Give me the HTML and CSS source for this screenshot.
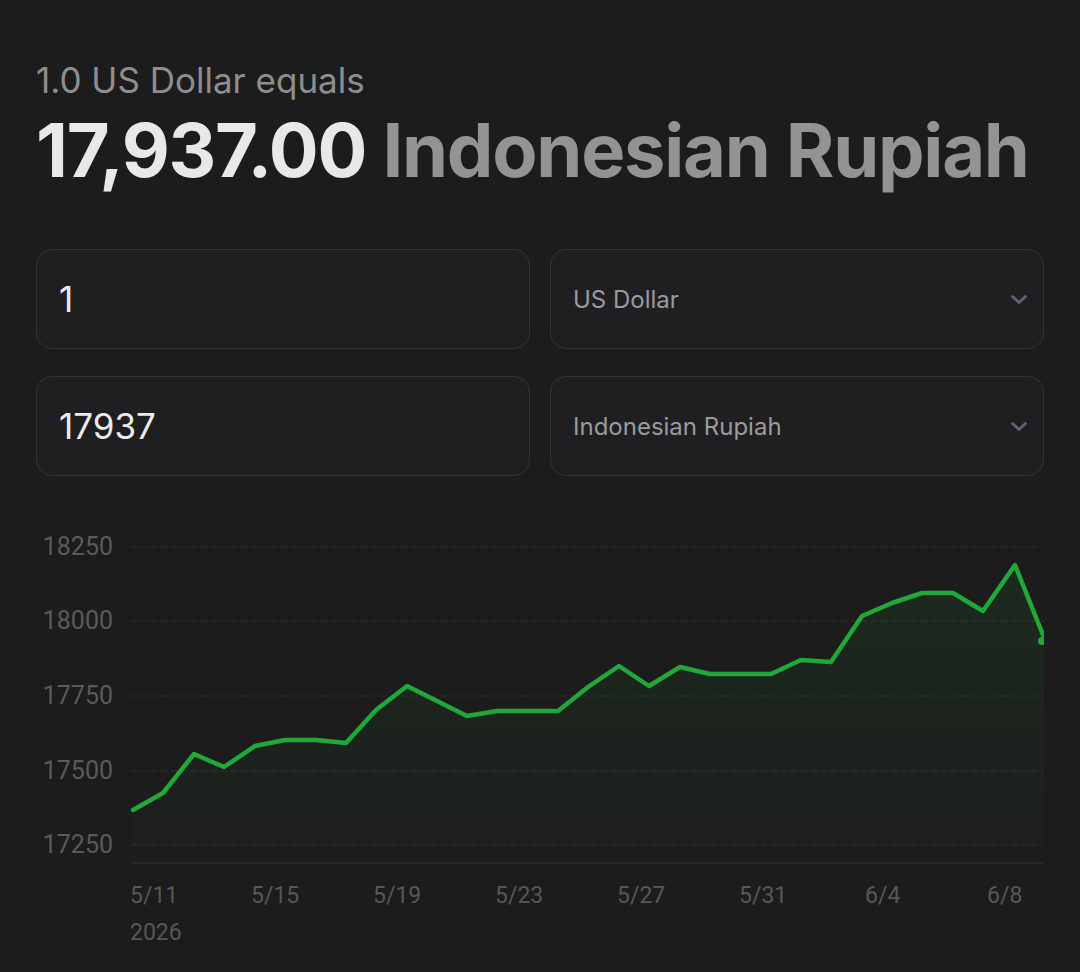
FILE: index.html
```html
<!DOCTYPE html>
<html lang="en">
<head>
<meta charset="utf-8">
<title>USD to IDR</title>
<link rel="stylesheet" href="styles.css">
</head>
<body>
<main class="page">
  <header class="rate">
    <p class="rate-lead">1.0 US Dollar equals</p>
    <h1 class="rate-value"><span class="rate-num">17,937.00</span> <span class="rate-cur">Indonesian Rupiah</span></h1>
  </header>

  <section class="converter">
    <div class="field"><input class="field-input" type="text" value="1"></div>
    <div class="select">
      <span class="select-label">US Dollar</span>
      <svg class="chevron" viewBox="0 0 18 11" width="18" height="11"><path d="M2.5 2.5l6.5 6 6.5-6" fill="none" stroke="currentColor" stroke-width="3" stroke-linecap="round" stroke-linejoin="round"/></svg>
    </div>
    <div class="field"><input class="field-input" type="text" value="17937"></div>
    <div class="select">
      <span class="select-label">Indonesian Rupiah</span>
      <svg class="chevron" viewBox="0 0 18 11" width="18" height="11"><path d="M2.5 2.5l6.5 6 6.5-6" fill="none" stroke="currentColor" stroke-width="3" stroke-linecap="round" stroke-linejoin="round"/></svg>
    </div>
  </section>

  <section class="chart">
    <svg class="chart-svg" viewBox="36 530 1008 440" width="1008" height="440">
      <defs>
        <linearGradient id="areaFill" x1="0" y1="0" x2="0" y2="1">
          <stop offset="0" stop-color="#22a83a" stop-opacity="0.10"/>
          <stop offset="1" stop-color="#22a83a" stop-opacity="0.02"/>
        </linearGradient>
      </defs>

      <g class="grid">
        <line x1="131" y1="547" x2="1044" y2="547"/>
        <line x1="131" y1="621" x2="1044" y2="621"/>
        <line x1="131" y1="696" x2="1044" y2="696"/>
        <line x1="131" y1="771" x2="1044" y2="771"/>
        <line x1="131" y1="845" x2="1044" y2="845"/>
      </g>
      <line class="axis" x1="131" y1="863" x2="1044" y2="863"/>

      <g class="y-labels">
        <text x="113" y="555">18250</text>
        <text x="113" y="629">18000</text>
        <text x="113" y="704">17750</text>
        <text x="113" y="779">17500</text>
        <text x="113" y="853">17250</text>
      </g>

      <g class="x-labels">
        <text x="130" y="903">5/11</text>
        <text x="130" y="940">2026</text>
        <text x="251" y="903">5/15</text>
        <text x="373" y="903">5/19</text>
        <text x="495" y="903">5/23</text>
        <text x="617" y="903">5/27</text>
        <text x="739" y="903">5/31</text>
        <text x="865" y="903">6/4</text>
        <text x="987" y="903">6/8</text>
      </g>

      <path class="area" fill="url(#areaFill)" d="M133 810 L163 793 L194 754 L224 767 L255 746 L285 740 L316 740 L346 743 L376 710 L407 686 L437 701 L467 716 L497 711 L528 711 L558 711 L588 687 L619 666 L649 686 L680 667 L710 674 L740 674 L771 674 L801 660 L831 662 L862 616 L892 603 L922 593 L953 593 L983 611 L1015 565 L1044 635 L1044 845 L133 845 Z"/>
      <polyline class="line" points="133,810 163,793 194,754 224,767 255,746 285,740 316,740 346,743 376,710 407,686 437,701 467,716 497,711 528,711 558,711 588,687 619,666 649,686 680,667 710,674 740,674 771,674 801,660 831,662 862,616 892,603 922,593 953,593 983,611 1015,565 1043,635"/>
      <circle class="end-dot" cx="1042" cy="641" r="4"/>
    </svg>
  </section>
</main>
</body>
</html>
```

FILE: styles.css
```css
* {
  box-sizing: border-box;
}

html,
body {
  margin: 0;
  background: #1c1c1c;
}

body {
  font-family: Inter, "Noto Sans", sans-serif;
  color: #e8e8e8;
}

.page {
  width: 1080px;
  padding: 59px 36px 0;
}

/* Headline rate */
.rate-lead {
  margin: 0;
  font-size: 35px;
  line-height: 42px;
  font-weight: 400;
  color: #8e8e8e;
}

.rate-value {
  margin: 5px 0 0;
  font-size: 74px;
  line-height: 88px;
  font-weight: 700;
  letter-spacing: -1.25px;
  white-space: nowrap;
}

.rate-num {
  color: #e8e8e8;
}

.rate-cur {
  color: #939393;
}

/* Amount and currency pickers */
.converter {
  margin-top: 55px;
  display: grid;
  grid-template-columns: 1fr 1fr;
  gap: 27px 20px;
}

.field,
.select {
  height: 100px;
  border: 1.5px solid #333337;
  border-radius: 16px;
  background: #1f1f22;
  display: flex;
  align-items: center;
}

.field-input {
  width: 100%;
  height: 100%;
  border: 0;
  outline: none;
  background: transparent;
  padding: 0 0 0 22px;
  font-family: Inter, "Noto Sans", sans-serif;
  font-size: 35px;
  color: #ececec;
}

.select {
  justify-content: space-between;
  padding: 0 15px 0 22px;
}

.select-label {
  font-size: 24px;
  color: #9a9aa0;
}

.chevron {
  color: #5b6476;
}

/* History chart */
.chart {
  margin-top: 54px;
}

.chart-svg {
  display: block;
}

.grid line {
  stroke: #2e2e2e;
  stroke-width: 1;
  stroke-dasharray: 6 4;
}

.axis {
  stroke: #333333;
  stroke-width: 1;
}

.y-labels text {
  font-family: Roboto, "Noto Sans", sans-serif;
  font-size: 25px;
  fill: #5a5a5a;
  text-anchor: end;
}

.x-labels text {
  font-family: Roboto, "Noto Sans", sans-serif;
  font-size: 23px;
  fill: #575757;
}

.line {
  fill: none;
  stroke: #20a838;
  stroke-width: 4.5;
  stroke-linejoin: round;
  stroke-linecap: round;
}

.end-dot {
  fill: #20a838;
}
```
